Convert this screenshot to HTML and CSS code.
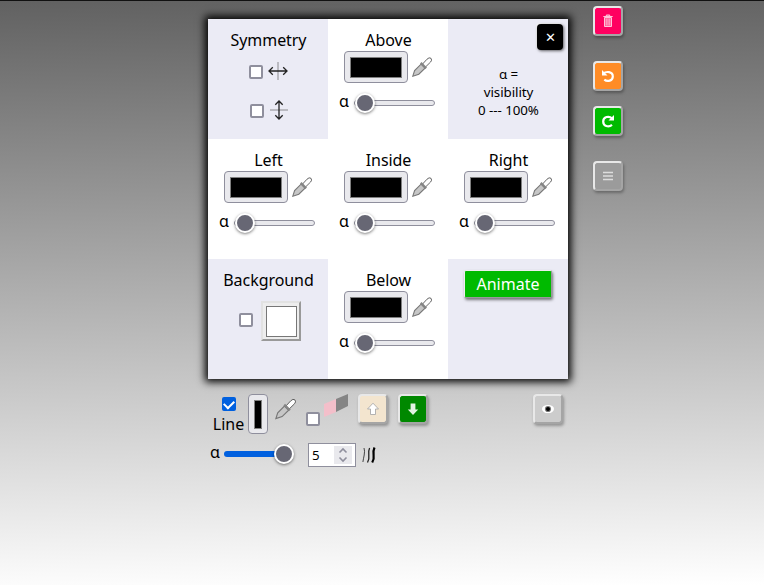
FILE: index.html
```html
<!DOCTYPE html>
<html lang="en">
<head>
<meta charset="utf-8">
<title>Draw</title>
<link rel="stylesheet" href="styles.css">
</head>
<body>
<svg class="defs" width="0" height="0">
  <symbol id="dropper" viewBox="0 0 20 20">
    <path d="M.8 19.2L2.6 13.6L9 7.2L13 11.2L6.8 17.2Z" fill="#c6c6c6" stroke="#777" stroke-width="1.1"/>
    <path d="M10.3 7.3L15 2.2Q17.2 -.1 19 1.3Q20.4 3.2 18.6 5L13.2 10.3Z" fill="#fff" stroke="#555" stroke-width=".9"/>
    <path d="M8.8 5.8L14.2 11.2" stroke="#858585" stroke-width="2.2"/>
  </symbol>
</svg>
<main class="page">
  <div class="column">
    <section class="panel">
      <div class="cell tint">
        <h2>Symmetry</h2>
        <label class="sym"><input type="checkbox"><svg width="20" height="20" viewBox="0 0 20 20"><path d="M10 1V19" stroke="#8a8a8d"/><path d="M1 10H19M4.8 6.3L1 10L4.8 13.7M15.2 6.3L19 10L15.2 13.7" fill="none" stroke="#222" stroke-width="1.3"/></svg></label>
        <label class="sym second"><input type="checkbox"><svg width="20" height="20" viewBox="0 0 20 20"><path d="M1 10H19" stroke="#8a8a8d"/><path d="M10 1V19M6.3 4.8L10 1L13.7 4.8M6.3 15.2L10 19L13.7 15.2" fill="none" stroke="#222" stroke-width="1.3"/></svg></label>
      </div>
      <div class="cell">
        <h2>Above</h2>
        <div class="pick"><span class="color"></span><svg class="drop"><use href="#dropper"/></svg></div>
        <div class="alpha"><span>α</span><input type="range" min="0" max="100" value="0"></div>
      </div>
      <div class="cell tint info">
        <button class="close">✕</button>
        <p>α =<br>visibility<br>0 --- 100%</p>
      </div>
      <div class="cell">
        <h2>Left</h2>
        <div class="pick"><span class="color"></span><svg class="drop"><use href="#dropper"/></svg></div>
        <div class="alpha"><span>α</span><input type="range" min="0" max="100" value="0"></div>
      </div>
      <div class="cell">
        <h2>Inside</h2>
        <div class="pick"><span class="color"></span><svg class="drop"><use href="#dropper"/></svg></div>
        <div class="alpha"><span>α</span><input type="range" min="0" max="100" value="0"></div>
      </div>
      <div class="cell">
        <h2>Right</h2>
        <div class="pick"><span class="color"></span><svg class="drop"><use href="#dropper"/></svg></div>
        <div class="alpha"><span>α</span><input type="range" min="0" max="100" value="0"></div>
      </div>
      <div class="cell tint">
        <h2>Background</h2>
        <div class="back"><input type="checkbox"><span class="paper"></span></div>
      </div>
      <div class="cell">
        <h2>Below</h2>
        <div class="pick"><span class="color"></span><svg class="drop"><use href="#dropper"/></svg></div>
        <div class="alpha"><span>α</span><input type="range" min="0" max="100" value="0"></div>
      </div>
      <div class="cell tint">
        <button class="animate">Animate</button>
      </div>
    </section>
    <section class="tools">
      <label class="line"><input type="checkbox" checked><span>Line</span></label>
      <span class="color tall"></span>
      <svg class="drop line-drop"><use href="#dropper"/></svg>
      <input class="erase-check" type="checkbox">
      <svg class="eraser" width="24" height="24" viewBox="0 0 24 24"><path d="M0 10L12 5V18L0 23Z" fill="#f3bfca"/><path d="M12 5L24 0V12L12 18Z" fill="#858585"/></svg>
      <button class="btn up"><svg width="14" height="14" viewBox="0 0 14 14"><path d="M7 1.2L12.5 7H9.5V12.5H4.5V7H1.5Z" fill="#fff" stroke="#aaa" stroke-width=".9"/></svg></button>
      <button class="btn down"><svg width="14" height="14" viewBox="0 0 14 14"><path d="M7 13L1.8 7.4H4.6V1.5H9.4V7.4H12.2Z" fill="#e3f3e3"/></svg></button>
      <button class="btn eye"><svg width="14" height="14" viewBox="0 0 14 14"><ellipse cx="7" cy="7" rx="6" ry="4.1" fill="#fff"/><circle cx="7" cy="7" r="3.1" fill="#777"/><circle cx="7" cy="7" r="2" fill="#000"/></svg></button>
    </section>
    <section class="stroke">
      <span class="label">α</span>
      <input class="full" type="range" min="0" max="100" value="100">
      <span class="number"><span>5</span><span class="spin"><svg width="18" height="18" viewBox="0 0 18 18"><path d="M5.5 6.5L9 3L12.5 6.5M5.5 11.5L9 15L12.5 11.5" fill="none" stroke="#8f8f9d" stroke-width="1.6"/></svg></span></span>
      <svg class="brush" width="14" height="18" viewBox="0 0 14 18"><path d="M2 2Q3 5 2.2 9T.9 16" fill="none" stroke="#333" stroke-width=".9"/><path d="M7.6 2Q6.2 5 6.8 9T5.5 16.5" fill="none" stroke="#222" stroke-width="1.3"/><path d="M12.5 1.5Q10.9 5 11.6 9T10.2 16.5" fill="none" stroke="#000" stroke-width="2.2"/></svg>
    </section>
  </div>
  <aside class="side">
    <button class="btn trash"><svg width="14" height="14" viewBox="0 0 14 14"><path d="M3.5 3.5H10.5V12.5H3.5ZM2.3 2.5H11.7M5.3 2.2V1H8.7V2.2" fill="#ff5c96" stroke="#ffc5da" stroke-width="1"/><path d="M5.3 4.5V11.5M7 4.5V11.5M8.7 4.5V11.5" stroke="#ffc5da" stroke-width=".7"/></svg></button>
    <button class="btn undo"><svg width="14" height="14" viewBox="0 0 14 14"><path d="M2.2 4.6C5 2.2 11.8 2.2 11.8 7.4C11.8 11.7 6.5 13.2 3.3 10.6" fill="none" stroke="#fff" stroke-width="2.2"/><path d="M1 1V6.5H6.5Z" fill="#fff"/></svg></button>
    <button class="btn redo"><svg width="14" height="14" viewBox="0 0 14 14"><path d="M11.2 4.5C8 1.5 2.2 2.7 2.2 7.4C2.2 12 7.5 13.8 11 10.8" fill="none" stroke="#fff" stroke-width="2.2"/><path d="M13 1V6.5H7.5Z" fill="#fff"/></svg></button>
    <button class="btn menu"><svg width="14" height="14" viewBox="0 0 14 14"><path d="M2 3.5H12M2 7H12M2 10.5H12" stroke="#ddd" stroke-width="1.7"/></svg></button>
  </aside>
</main>
</body>
</html>
```
FILE: styles.css
```css
* { box-sizing: border-box; }
html { height: 100%; }
body {
  margin: 0;
  height: 100%;
  overflow: hidden;
  border-top: 1px solid #111;
  background: linear-gradient(179deg, #616161, #fff);
  font: 16px/22px "Noto Sans", sans-serif;
  color: #000;
}
.defs { display: block; }
.page { display: flex; align-items: flex-start; gap: 25px; padding-left: 208px; }
.column { width: 360px; padding-top: 18px; }
.panel {
  display: grid;
  grid-template-columns: repeat(3, 120px);
  grid-template-rows: repeat(3, 120px);
  background: #fff;
  box-shadow: 0 0 8px 3px #000;
}
.cell { position: relative; padding-top: 10px; }
.tint { background: #ebebf5; }
h2 { margin: 0 -1px 0 0; font-size: 16px; font-weight: 400; text-align: center; letter-spacing: -.06px; }
.pick { display: flex; align-items: center; gap: 4px; padding-left: 16px; }
.color {
  flex: none;
  width: 64px;
  height: 32px;
  border: 1px solid #8f8f9d;
  border-radius: 4px;
  background: #e9e9ed;
  padding: 5px 5px 6px;
}
.color::before { content: ""; display: block; height: 100%; background: #000; border: 1px solid #808080; }
.drop { width: 20px; height: 20px; flex: none; }
.alpha { display: flex; align-items: center; height: 20px; margin-top: 10px; padding-left: 11px; }
.alpha span { width: 15px; line-height: 20px; margin-top: -4px; }
input { margin: 0; appearance: none; flex: none; }
input[type=range] { width: 81px; height: 20px; background: none; }
input[type=range]::-webkit-slider-runnable-track { height: 6px; border: 1px solid #8f8f9d; border-radius: 3px; background: #e9e9ed; }
input[type=range]::-webkit-slider-thumb {
  appearance: none;
  width: 20px;
  height: 20px;
  margin-top: -8px;
  border: 2px solid #fff;
  border-radius: 50%;
  background: #676774;
  box-shadow: 0 1px 3px rgba(0, 0, 0, .5);
}
input[type=checkbox] { width: 14px; height: 14px; border: 2px solid #8f8f9d; border-radius: 2px; background: #fff; }
.sym { display: flex; align-items: center; gap: 5px; height: 20px; margin: 11px 0 0 41px; }
.sym svg { margin-top: -2px; }
.sym.second { margin: 19px 0 0 42px; }
.info { font-size: 13.333px; line-height: 18px; text-align: center; }
.info p { margin: 0 -1px 0 0; padding-top: 36px; letter-spacing: -.06px; }
button { font-family: "Noto Sans", sans-serif; padding: 0; border: 0; }
.close {
  position: absolute;
  top: 5px;
  right: 5px;
  width: 26px;
  height: 26px;
  border-radius: 4px;
  background: #000;
  color: #fff;
  font-size: 13px;
  box-shadow: 1px 1px 3px rgba(0, 0, 0, .6), -1px -1px 1px #f6f6f6;
}
.back { display: flex; align-items: center; gap: 8px; margin: 10px 0 0 31px; }
.back input { margin-top: -2px; }
.paper { width: 40px; height: 40px; padding: 3px; border: 2px solid; border-color: #e2e2e2 #999 #999 #e2e2e2; background: #ededed; }
.paper::before { content: ""; display: block; width: 29px; height: 29px; border: 1px solid #777; background: #fff; }
.animate {
  display: block;
  width: 88px;
  height: 28px;
  margin: 1px 0 0 16px;
  border: 1px solid;
  border-color: #eee #999 #999 #eee;
  border-radius: 2px;
  background: #00ba00;
  color: #fff;
  font-size: 16px;
  line-height: 24px;
  box-shadow: 1px 2px 3px rgba(0, 0, 0, .5);
}
.tools { display: flex; align-items: flex-start; margin-top: 15px; height: 46px; }
.line { display: flex; flex-direction: column; width: 40px; padding-left: 1px; align-items: center; }
.line input { margin-top: 3px; }
.line span { margin-top: 2px; }
.line input:checked { border-color: #0060df; background: #0060df; display: grid; place-items: center; }
.line input:checked::before { content: ""; width: 8px; height: 5px; border: solid #fff; border-width: 0 0 2px 2px; transform: translateY(-1px) rotate(-45deg); }
.tall { width: 20px; height: 40px; }
.line-drop { margin: 4px 0 0 7px; width: 21px; height: 22px; }
input.erase-check { margin: 18px 0 0 10px; }
.eraser { margin-left: 4px; }
.btn {
  display: grid;
  place-items: center;
  flex: none;
  width: 30px;
  height: 30px;
  border: 2px solid;
  border-color: #e8e8e8 #a5a5a5 #a5a5a5 #e8e8e8;
  border-radius: 4px;
  box-shadow: 1px 2px 3px rgba(0, 0, 0, .3);
}
.up { margin-left: 10px; background: #f3e5cf; }
.down { margin-left: 10px; background: #008800; }
.eye { margin-left: 105px; background: #ccc; }
.stroke { display: flex; align-items: center; height: 30px; }
.label { width: 16px; padding-left: 2px; margin-top: -7px; }
input.full { width: 70px; margin: -2px 14px 0 0; }
input.full::-webkit-slider-runnable-track { border: 0; background: linear-gradient(90deg, #0060df 62px, transparent 62px); }
input.full::-webkit-slider-thumb { margin-top: -7px; }
.number { display: flex; align-items: center; justify-content: space-between; width: 48px; height: 24px; padding: 0 3px; border: 1px solid #8f8f9d; background: #fff; font-size: 13.333px; }
.spin { display: flex; width: 18px; height: 18px; background: #e9e9ed; }
.brush { margin-left: 6px; }
.side { display: flex; flex-direction: column; padding-top: 5px; }
.trash { background: #ff0060; }
.undo { margin-top: 25px; background: #ff8c26; }
.redo { margin-top: 15px; background: #00ba00; }
.menu { margin-top: 25px; background: #9b9b9b; }
```
